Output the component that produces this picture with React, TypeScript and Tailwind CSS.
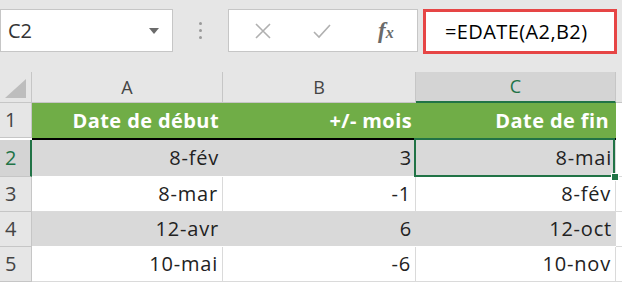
const font = { fontFamily: '"Open Sans", "Noto Sans", sans-serif' };

type Row = { n: number; a: string; b: string; c: string; gray: boolean };

const rows: Row[] = [
  { n: 2, a: '8-fév', b: '3', c: '8-mai', gray: true },
  { n: 3, a: '8-mar', b: '-1', c: '8-fév', gray: false },
  { n: 4, a: '12-avr', b: '6', c: '12-oct', gray: true },
  { n: 5, a: '10-mai', b: '-6', c: '10-nov', gray: false },
];

function Toolbar() {
  return (
    <div className="flex h-[72px] items-start bg-[#e6e6e6] pt-[9px]">
      {/* Name box */}
      <div className="flex h-[43px] w-[173px] items-center justify-between border border-[#c6c6c6] bg-white pl-[7px] pr-[13px]">
        <span className="text-[20px] text-[#333]">C2</span>
        <svg width="10" height="6" viewBox="0 0 10 6">
          <path d="M0 0 L10 0 L5 6 Z" fill="#6b6b6b" />
        </svg>
      </div>

      {/* Separator dots */}
      <div className="flex h-[43px] w-[55px] flex-col items-center justify-center gap-[4px]">
        <span className="h-[3px] w-[3px] rounded-full bg-[#9a9a9a]" />
        <span className="h-[3px] w-[3px] rounded-full bg-[#9a9a9a]" />
        <span className="h-[3px] w-[3px] rounded-full bg-[#9a9a9a]" />
      </div>

      {/* Cancel / enter / fx */}
      <div className="relative h-[43px] w-[190px] border border-[#c6c6c6] bg-white">
        <svg className="absolute left-[26px] top-[13px]" width="16" height="16" viewBox="0 0 16 16">
          <path d="M1 1 L15 15 M15 1 L1 15" stroke="#b0b0b0" strokeWidth="1.6" />
        </svg>
        <svg className="absolute left-[84px] top-[13px]" width="18" height="16" viewBox="0 0 18 16">
          <path d="M1 9 L6 14 L17 2" stroke="#b0b0b0" strokeWidth="1.6" fill="none" />
        </svg>
        <span
          className="absolute left-[149px] top-[4px] text-[23px] font-bold italic text-[#6a6a6a]"
          style={{ fontFamily: '"Liberation Serif", serif' }}
        >
          f<span className="text-[16px]">x</span>
        </span>
      </div>

      {/* Formula box */}
      <div className="ml-[5px] flex h-[45px] w-[194px] items-center border-[3px] border-[#e64545] bg-white pl-[19px]">
        <span className="text-[20px] tracking-[0.02em] text-black">=EDATE(A2,B2)</span>
      </div>
    </div>
  );
}

function ColHeader({ label, selected }: { label: string; selected?: boolean }) {
  return (
    <div
      className={
        selected
          ? 'flex h-[31px] items-center justify-center border-b-2 border-r border-[#217346] border-r-[#c6c6c6] bg-[#d4d4d4] text-[18px] text-[#217346]'
          : 'flex h-[31px] items-center justify-center border-b border-r border-[#c6c6c6] bg-[#e6e6e6] text-[18px] text-[#444]'
      }
    >
      {label}
    </div>
  );
}

function RowHeader({ n, selected, tall }: { n: number; selected?: boolean; tall?: boolean }) {
  return (
    <div
      className={
        (tall ? 'h-[37px] ' : 'h-[35px] ') +
        (selected
          ? 'flex items-center border-b border-r-2 border-[#c6c6c6] border-r-[#217346] bg-[#d4d4d4] pl-[5px] text-[20px] text-[#217346]'
          : 'flex items-center border-b border-r border-[#c6c6c6] bg-[#e6e6e6] pl-[5px] text-[20px] text-[#444]')
      }
    >
      {n}
    </div>
  );
}

function Cell({ v, gray, tall }: { v: string; gray: boolean; tall?: boolean }) {
  return (
    <div
      className={
        (tall ? 'h-[37px] ' : 'h-[35px] ') +
        (gray
          ? 'flex items-center justify-end border-b border-white bg-[#d9d9d9] pr-[4px] text-[20px] tracking-[0.04em] text-[#222]'
          : 'flex items-center justify-end border-b border-r border-[#dadada] bg-white pr-[4px] text-[20px] tracking-[0.04em] text-[#222]')
      }
    >
      {v}
    </div>
  );
}

function Sheet() {
  return (
    <div className="relative grid grid-cols-[32px_191px_193px_200px_6px]">
      {/* Column headers */}
      <div className="relative h-[31px] border-b border-r border-[#c6c6c6] bg-[#e6e6e6]">
        <svg className="absolute bottom-[4px] right-[5px]" width="21" height="19" viewBox="0 0 21 19">
          <path d="M21 0 L21 19 L0 19 Z" fill="#bdbdbd" />
        </svg>
      </div>
      <ColHeader label="A" />
      <ColHeader label="B" />
      <ColHeader label="C" selected />
      <div className="h-[31px] border-b border-[#c6c6c6] bg-[#e6e6e6]" />

      {/* Row 1: table header */}
      <RowHeader n={1} />
      <div className="flex h-[37px] items-center justify-end border-b-2 border-black bg-[#70ad47] pr-[4px] text-[20px] font-bold tracking-[0.02em] text-white">
        Date de début
      </div>
      <div className="flex h-[37px] items-center justify-end border-b-2 border-black bg-[#70ad47] pr-[4px] text-[20px] font-bold tracking-[0.02em] text-white">
        +/- mois
      </div>
      <div className="flex h-[37px] items-center justify-end border-b-2 border-black bg-[#70ad47] pr-[7px] text-[20px] font-bold tracking-[0.02em] text-white">
        Date de fin
      </div>
      <div className="h-[37px] bg-white" />

      {rows.map((r) => (
        <div key={r.n} className="contents">
          <RowHeader n={r.n} selected={r.n === 2} tall={r.n === 2} />
          <Cell v={r.a} gray={r.gray} tall={r.n === 2} />
          <Cell v={r.b} gray={r.gray} tall={r.n === 2} />
          <Cell v={r.c} gray={r.gray} tall={r.n === 2} />
          <div className={(r.n === 2 ? 'h-[37px] ' : 'h-[35px] ') + 'border-b border-[#dadada] bg-white'} />
        </div>
      ))}

      {/* Selection on C2 */}
      <div className="pointer-events-none absolute left-[414px] top-[66px] h-[39px] w-[201px] border-2 border-[#217346]" />
      <div className="pointer-events-none absolute left-[611px] top-[101px] h-[8px] w-[8px] border border-white bg-[#217346]" />
    </div>
  );
}

export default function App() {
  return (
    <div className="h-[282px] w-[622px] overflow-hidden bg-white" style={font}>
      <Toolbar />
      <Sheet />
    </div>
  );
}
